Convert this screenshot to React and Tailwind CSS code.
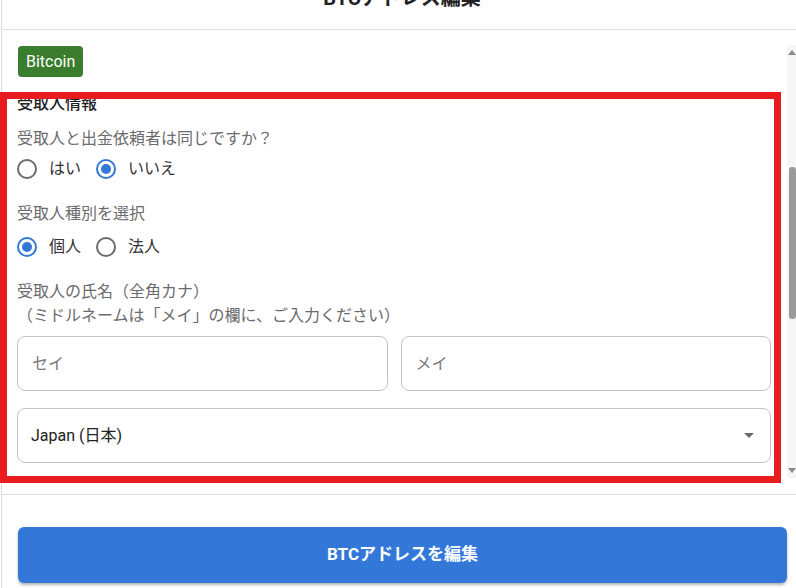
import React, { useState } from 'react';

const font = { fontFamily: 'Roboto, "Noto Sans CJK JP", sans-serif' };

const Radio = ({ checked, label, onClick }) => (
  <button type="button" onClick={onClick} className="flex items-center gap-3 h-6">
    {checked ? (
      <span className="w-5 h-5 rounded-full border-2 border-[#3478d6] flex items-center justify-center">
        <span className="w-[10px] h-[10px] rounded-full bg-[#3478d6]" />
      </span>
    ) : (
      <span className="w-5 h-5 rounded-full border-2 border-[#6b6b6b]" />
    )}
    <span className="text-[16px] text-[#333]">{label}</span>
  </button>
);

const App = () => {
  const [same, setSame] = useState('no');
  const [kind, setKind] = useState('person');

  return (
    <div className="w-[796px] h-[588px] overflow-hidden bg-white pl-px" style={font}>
      <div className="h-full border-l border-[#dcdcdc] flex flex-col">
        {/* header */}
        <div className="h-[30px] shrink-0 border-b border-[#e0e0e0] flex justify-center overflow-hidden">
          <h2 className="-mt-[16px] text-[20px] leading-[28px] font-bold text-[#222] pl-[6px]">BTCアドレス編集</h2>
        </div>

        {/* body */}
        <div className="h-[465px] shrink-0 border-b border-[#e0e0e0] flex">
          <div className="flex-1 flex flex-col">
            <div className="mt-4 ml-4">
              <span className="inline-flex items-center h-[31px] px-[8px] rounded-[4px] bg-[#3a7d2e] text-white text-[16px]">Bitcoin</span>
            </div>

            <div className="mt-[15px] -ml-[2px] w-[781px] h-[391px] border-[7px] border-[#e81c1f] overflow-hidden">
              <div className="pl-[10px] pr-[3px]">
                <h3 className="-mt-[5px] text-[16px] leading-5 font-medium text-[#222]">受取人情報</h3>

                <p className="mt-[14px] text-[16px] leading-[22px] text-[#6b6b6b]">受取人と出金依頼者は同じですか？</p>
                <div className="mt-[7px] flex gap-[15px]">
                  <Radio label="はい" checked={same === 'yes'} onClick={() => setSame('yes')} />
                  <Radio label="いいえ" checked={same === 'no'} onClick={() => setSame('no')} />
                </div>

                <p className="mt-[22px] text-[16px] leading-[22px] text-[#6b6b6b]">受取人種別を選択</p>
                <div className="mt-[10px] flex gap-[15px]">
                  <Radio label="個人" checked={kind === 'person'} onClick={() => setKind('person')} />
                  <Radio label="法人" checked={kind === 'corp'} onClick={() => setKind('corp')} />
                </div>

                <p className="mt-[21px] text-[16px] leading-6 text-[#6b6b6b]">
                  受取人の氏名（全角カナ）<br />（ミドルネームは「メイ」の欄に、ご入力ください）
                </p>

                <div className="mt-[8px] flex gap-[13px]">
                  <input
                    placeholder="セイ"
                    className="flex-1 min-w-0 h-[55px] px-[14px] rounded-lg border border-[#c4c4c4] text-[16px] placeholder-[#7a7a7a] outline-none"
                  />
                  <input
                    placeholder="メイ"
                    className="flex-1 min-w-0 h-[55px] px-[14px] rounded-lg border border-[#c4c4c4] text-[16px] placeholder-[#7a7a7a] outline-none"
                  />
                </div>

                <div className="mt-[17px] h-[55px] rounded-lg border border-[#c4c4c4] flex items-center justify-between pl-[13px] pr-[16px]">
                  <span className="text-[16px] text-[#222]">Japan (日本)</span>
                  <svg width="10" height="5" viewBox="0 0 10 5">
                    <path d="M0 0h10L5 5z" fill="#6b6b6b" />
                  </svg>
                </div>
              </div>
            </div>
          </div>

          {/* scrollbar */}
          <div className="w-[9px] mt-[15px] h-[433px] bg-[#f6f6f6] flex flex-col items-center">
            <svg width="8" height="6" viewBox="0 0 8 6" className="mt-[4px]">
              <path d="M0 6L4 1 8 6z" fill="#8a8a8a" />
            </svg>
            <div className="mt-[112px] w-[7px] h-[152px] rounded-[3px] bg-[#9a9a9a] ml-[2px]" />
            <div className="flex-1" />
            <svg width="8" height="6" viewBox="0 0 8 6" className="mb-[4px]">
              <path d="M0 0h8L4 5z" fill="#8a8a8a" />
            </svg>
          </div>
        </div>

        {/* footer */}
        <div className="pt-8 pl-4 pr-[9px]">
          <button
            type="button"
            className="w-full h-14 rounded-[6px] bg-[#3378d8] text-white text-[17px] font-bold shadow-[0_2px_3px_rgba(0,0,0,0.3)]"
          >
            BTCアドレスを編集
          </button>
        </div>
      </div>
    </div>
  );
};

export default App;
